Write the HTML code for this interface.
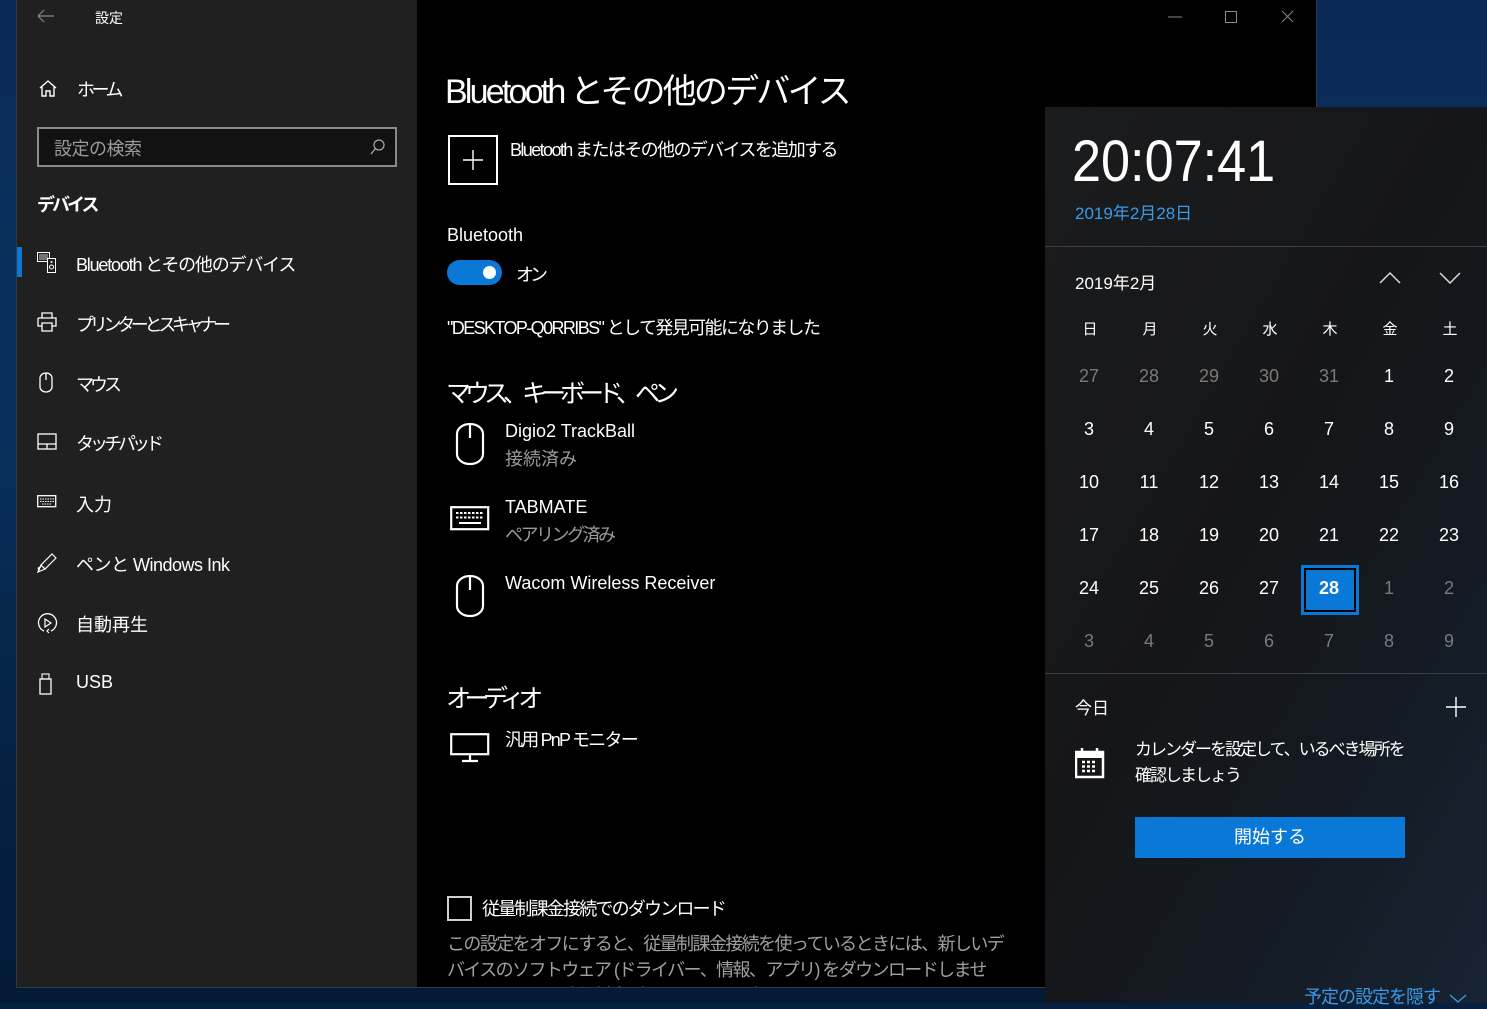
<!DOCTYPE html>
<html><head><meta charset="utf-8"><style>
*{margin:0;padding:0;box-sizing:border-box}
body{width:1487px;height:1003px;overflow:hidden;position:relative;background:#062040;font-family:"Liberation Sans","Noto Sans CJK JP",sans-serif;color:#fff}
.a{position:absolute;white-space:nowrap}
#desk{position:absolute;left:0;top:0;width:1487px;height:1003px;background:linear-gradient(180deg,#0a2a55 0%,#08305e 40%,#052447 70%,#041a36 100%)}
#win{position:absolute;left:16px;top:0;width:1301px;height:988px;background:#000;border:1px solid #2d3a48;border-top:none}
#side{position:absolute;left:17px;top:0;width:400px;height:987px;background:#202020}
.nav{font-size:18px;color:#fff}
.fly{position:absolute;left:1045px;top:107px;width:442px;height:896px;background:linear-gradient(120deg,#1b1c1e 0%,#151618 45%,#141a22 70%,#172433 100%)}
.cal{font-size:18px;text-align:center;width:40px}
.g{color:#7a7a7a}
.sub{color:#9a9a9a}
</style></head><body>
<div id="desk"></div>
<div id="win"></div>
<div id="side"></div>
<!-- title bar -->
<svg class="a" style="left:37px;top:9px" width="18" height="14"><path d="M1 7H17M1 7L7 1M1 7L7 13" stroke="#8a8a8a" stroke-width="1.2" fill="none"/></svg>
<div class="a" style="left:95px;top:8px;font-size:14px">設定</div>
<svg class="a" style="left:1160px;top:8px" width="140" height="18"><path d="M8 9H22" stroke="#888" stroke-width="1"/><rect x="65.5" y="3.5" width="11" height="11" stroke="#888" fill="none"/><path d="M122 3L133 14M133 3L122 14" stroke="#888" stroke-width="1"/></svg>
<!-- sidebar -->
<svg class="a" style="left:38px;top:79px" width="20" height="18"><path d="M2 9L10 2L18 9M4 7V17H8V12H12V17H16V7" stroke="#fff" stroke-width="1.4" fill="none"/></svg>
<div class="a nav" style="left:77px;top:76px;letter-spacing:-3.5px">ホーム</div>
<div class="a" style="left:37px;top:127px;width:360px;height:40px;border:2px solid #8a8a8a;background:#121212"></div>
<div class="a" style="left:54px;top:135px;font-size:18px;color:#9a9a9a;letter-spacing:-0.5px">設定の検索</div>
<svg class="a" style="left:369px;top:138px" width="18" height="18"><circle cx="10" cy="7" r="5" stroke="#aaa" stroke-width="1.2" fill="none"/><path d="M6.5 10.5L2 16" stroke="#aaa" stroke-width="1.3"/></svg>
<div class="a" style="left:37px;top:191px;font-size:18px;font-weight:bold;letter-spacing:-3px">デバイス</div>
<div class="a" style="left:17px;top:247px;width:5px;height:30px;background:#0a78d7"></div>
<svg class="a" style="left:37px;top:252px" width="22" height="22"><rect x="0.5" y="0.5" width="12" height="9" stroke="#fff" fill="none"/><path d="M2 3H11M2 5H11M2 7H11" stroke="#fff" stroke-width="0.8"/><rect x="10.5" y="6.5" width="8" height="14" stroke="#fff" fill="#202020"/><circle cx="14.5" cy="15" r="2" stroke="#fff" fill="none"/><circle cx="14.5" cy="10" r="1" fill="#fff"/></svg>
<div class="a nav" style="left:76px;top:251px;letter-spacing:-1.2px">Bluetooth とその他のデバイス</div>
<svg class="a" style="left:37px;top:312px" width="20" height="20"><path d="M5 6V1H15V6M1 6H19V14H15M5 14H1V6M5 11H15V19H5Z" stroke="#fff" stroke-width="1.3" fill="none"/></svg>
<div class="a nav" style="left:76px;top:311px;letter-spacing:-4.3px">プリンターとスキャナー</div>
<svg class="a" style="left:38px;top:372px" width="16" height="22"><path d="M2 6A6 5 0 0 1 14 6V15A6 5 0 0 1 2 15Z M8 1V8" stroke="#fff" stroke-width="1.3" fill="none"/></svg>
<div class="a nav" style="left:76px;top:371px;letter-spacing:-4px">マウス</div>
<svg class="a" style="left:37px;top:433px" width="20" height="18"><rect x="1" y="1" width="18" height="15" stroke="#fff" stroke-width="1.3" fill="none"/><path d="M1 11H19M10 11V16" stroke="#fff" stroke-width="1.3"/></svg>
<div class="a nav" style="left:76px;top:430px;letter-spacing:-4px">タッチパッド</div>
<svg class="a" style="left:37px;top:495px" width="20" height="14"><rect x="0.7" y="0.7" width="18" height="11" stroke="#fff" stroke-width="1.3" fill="none"/><path d="M3 4H17M3 6.5H17M5 9H15" stroke="#fff" stroke-width="1" stroke-dasharray="1.5 1"/></svg>
<div class="a nav" style="left:76px;top:491px">入力</div>
<svg class="a" style="left:36px;top:552px" width="22" height="22"><path d="M16 2L20 6L9 17L5 13Z M5 13L2 20L9 17 M3 19Q1 15 5 15" stroke="#fff" stroke-width="1.2" fill="none"/></svg>
<div class="a nav" style="left:76px;top:551px;letter-spacing:-0.5px">ペンと Windows Ink</div>
<svg class="a" style="left:36px;top:612px" width="22" height="22"><path d="M8 19A9 9 0 1 1 15 19" stroke="#fff" stroke-width="1.3" fill="none"/><path d="M9 7L15 11L9 15Z" stroke="#fff" stroke-width="1.2" fill="none"/><path d="M13 17L11 19L13 21" stroke="#fff" stroke-width="1.2" fill="none"/></svg>
<div class="a nav" style="left:76px;top:611px">自動再生</div>
<svg class="a" style="left:39px;top:673px" width="14" height="22"><rect x="1" y="6" width="11" height="15" stroke="#fff" stroke-width="1.3" fill="none"/><rect x="3" y="1" width="7" height="5" stroke="#fff" stroke-width="1.1" fill="none"/></svg>
<div class="a nav" style="left:76px;top:672px">USB</div>
<!-- main -->
<div class="a" style="left:445px;top:64px;font-size:34px;letter-spacing:-2.8px">Bluetooth とその他のデバイス</div>
<div class="a" style="left:448px;top:135px;width:50px;height:50px;border:2px solid #fff"></div>
<svg class="a" style="left:462px;top:149px" width="22" height="22"><path d="M11 1V21M1 11H21" stroke="#fff" stroke-width="1.4"/></svg>
<div class="a" style="left:510px;top:136px;font-size:18px;letter-spacing:-1.6px">Bluetooth またはその他のデバイスを追加する</div>
<div class="a" style="left:447px;top:225px;font-size:18px">Bluetooth</div>
<div class="a" style="left:447px;top:260px;width:55px;height:25px;border-radius:13px;background:#0a78d7"></div>
<div class="a" style="left:483px;top:266px;width:13px;height:13px;border-radius:50%;background:#fff"></div>
<div class="a" style="left:516px;top:261px;font-size:18px;letter-spacing:-4px">オン</div>
<div class="a" style="left:447px;top:314px;font-size:18px;letter-spacing:-1.6px">"DESKTOP-Q0RRIBS" として発見可能になりました</div>
<div class="a" style="left:446px;top:374px;font-size:25px;letter-spacing:-6px">マウス、キーボード、ペン</div>
<svg class="a" style="left:455px;top:422px" width="30" height="44"><path d="M2 12A13 10 0 0 1 28 12V32A13 10 0 0 1 2 32Z M15 3V16" stroke="#fff" stroke-width="2.2" fill="none"/></svg>
<div class="a" style="left:505px;top:421px;font-size:18px">Digio2 TrackBall</div>
<div class="a sub" style="left:505px;top:445px;font-size:18px">接続済み</div>
<svg class="a" style="left:450px;top:506px" width="40" height="25"><rect x="1.2" y="1.2" width="37" height="22" stroke="#fff" stroke-width="2.2" fill="none"/><path d="M6 7H34M6 11.5H34" stroke="#fff" stroke-width="2" stroke-dasharray="2.5 1.5"/><path d="M9 17H31" stroke="#fff" stroke-width="2"/></svg>
<div class="a" style="left:505px;top:497px;font-size:18px">TABMATE</div>
<div class="a sub" style="left:505px;top:521px;font-size:18px;letter-spacing:-2.5px">ペアリング済み</div>
<svg class="a" style="left:455px;top:574px" width="30" height="44"><path d="M2 12A13 10 0 0 1 28 12V32A13 10 0 0 1 2 32Z M15 3V16" stroke="#fff" stroke-width="2.2" fill="none"/></svg>
<div class="a" style="left:505px;top:573px;font-size:18px">Wacom Wireless Receiver</div>
<div class="a" style="left:446px;top:679px;font-size:25px;letter-spacing:-6.5px">オーディオ</div>
<svg class="a" style="left:450px;top:733px" width="40" height="30"><rect x="1.2" y="1.2" width="37" height="20" stroke="#fff" stroke-width="2.2" fill="none"/><path d="M20 21V28M12 28H28" stroke="#fff" stroke-width="2.2"/></svg>
<div class="a" style="left:505px;top:726px;font-size:18px;letter-spacing:-1.8px">汎用 PnP モニター</div>
<div class="a" style="left:447px;top:896px;width:25px;height:25px;border:2px solid #cfcfcf"></div>
<div class="a" style="left:482px;top:895px;font-size:18px;letter-spacing:-1.8px">従量制課金接続でのダウンロード</div>
<div class="a" style="left:447px;top:931px;font-size:18px;color:#a0a0a0;line-height:26px;white-space:normal;width:570px;height:56px;overflow:hidden;letter-spacing:-1.6px">この設定をオフにすると、従量制課金接続を使っているときには、新しいデバイスのソフトウェア (ドライバー、情報、アプリ) をダウンロードしません。これにより追加料金がかかることを避けられます。</div>
<!-- flyout -->
<div class="fly"></div>
<div class="a" style="left:1072px;top:128px;font-size:58px;font-weight:300;transform:scaleX(0.9);transform-origin:0 0">20:07:41</div>
<div class="a" style="left:1075px;top:199px;font-size:17px;color:#3a9ae8">2019年2月28日</div>
<div class="a" style="left:1045px;top:246px;width:442px;height:1px;background:#3a3d42"></div>
<div class="a" style="left:1075px;top:269px;font-size:17px">2019年2月</div>
<svg class="a" style="left:1378px;top:270px" width="86" height="16"><path d="M2 13L12 3L22 13" stroke="#ddd" stroke-width="1.5" fill="none"/><path d="M62 3L72 13L82 3" stroke="#ddd" stroke-width="1.5" fill="none"/></svg>
<div class="a" style="left:1301px;top:565px;width:58px;height:50px;border:3px solid #0a78d7;background:#000"></div>
<div class="a" style="left:1306px;top:570px;width:48px;height:40px;background:#0a78d7"></div>
<div id="cal"></div>
<div class="a" style="left:1045px;top:673px;width:442px;height:1px;background:#3a3d42"></div>
<div class="a" style="left:1075px;top:694px;font-size:17px">今日</div>
<svg class="a" style="left:1445px;top:696px" width="22" height="22"><path d="M11 1V21M1 11H21" stroke="#fff" stroke-width="1.4"/></svg>
<svg class="a" style="left:1075px;top:747px" width="30" height="32"><path d="M1 5H28V30H1Z" stroke="#fff" stroke-width="2.5" fill="none"/><rect x="1" y="5" width="27" height="6" fill="#fff"/><path d="M7 1V6M22 1V6" stroke="#fff" stroke-width="2.5"/><path d="M7 15H22M7 19.5H22M7 24H22" stroke="#fff" stroke-width="2.5" stroke-dasharray="3 2"/></svg>
<div class="a" style="left:1135px;top:737px;font-size:17px;line-height:26px;letter-spacing:-2px">カレンダーを設定して、いるべき場所を<br>確認しましょう</div>
<div class="a" style="left:1135px;top:817px;width:270px;height:41px;background:#0a78d7;font-size:18px;text-align:center;line-height:41px">開始する</div>
<div class="a" style="left:1304px;top:983px;font-size:18px;color:#3a9ae8;letter-spacing:-1px">予定の設定を隠す</div>
<svg class="a" style="left:1448px;top:993px" width="20" height="12"><path d="M2 2L10 9L18 2" stroke="#3a9ae8" stroke-width="1.3" fill="none"/></svg>
<script>
var c=document.getElementById('cal'),h='';
var wd=['日','月','火','水','木','金','土'];
for(var i=0;i<7;i++)h+='<div class="a cal" style="left:'+(1070+60*i)+'px;top:318px;font-size:15px">'+wd[i]+'</div>';
var d=[27,28,29,30,31],n=[];
for(i=0;i<5;i++)n.push([d[i],1]);
for(i=1;i<=28;i++)n.push([i,0]);
for(i=1;i<=9;i++)n.push([i,1]);
for(i=0;i<42;i++){var r=Math.floor(i/7),col=i%7;
h+='<div class="a cal'+(n[i][1]?' g':'')+'" style="left:'+(1069+60*col)+'px;top:'+(366+53*r)+'px;'+(i==32?'font-weight:bold':'')+'">'+n[i][0]+'</div>';}
c.innerHTML=h;
</script>
</body></html>
